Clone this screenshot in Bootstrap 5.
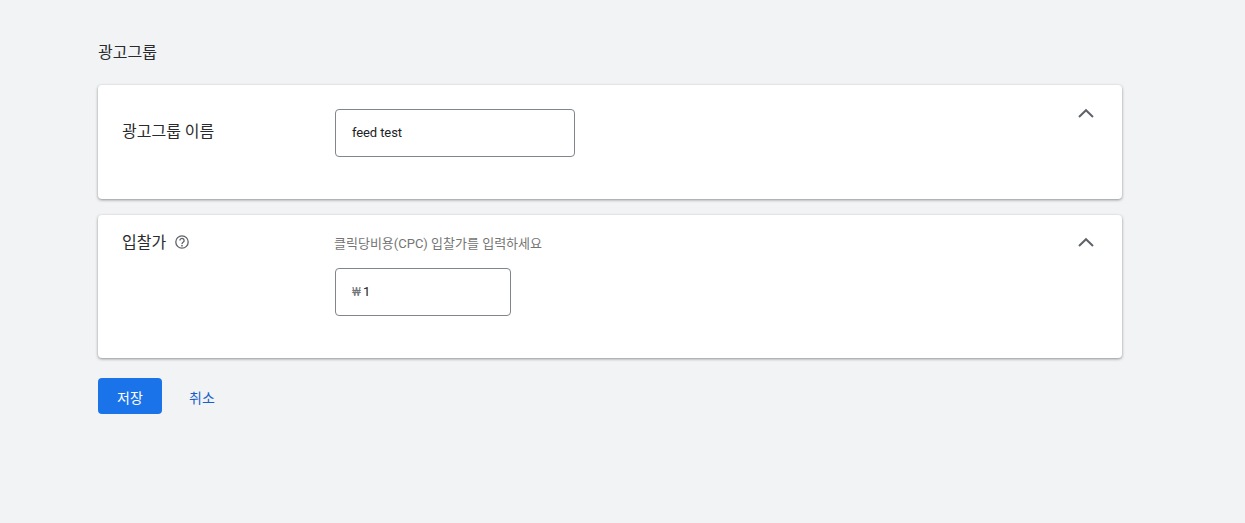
<!DOCTYPE html>
<html lang="ko">
<head>
<meta charset="utf-8">
<title>광고그룹</title>
<link href="https://cdn.jsdelivr.net/npm/bootstrap@5.3.0/dist/css/bootstrap.min.css" rel="stylesheet">
<style>
html, body { height: 100%; }
body { background: #f1f3f4; font-family: Roboto, "Noto Sans CJK KR", sans-serif; color: #202124; }
.page-wrap { width: 1024px; margin-left: 98px; padding-top: 41px; }
.page-title { font-size: 16px; line-height: 24px; font-weight: 400; margin: 0 0 20px; color: #2a2b2e; }
.panel { background: #fff; border-radius: 4px; box-shadow: 0 1px 3px rgba(60,64,67,.55); margin-bottom: 16px; padding: 24px; position: relative; }
.panel-a { height: 114px; }
.panel-b { height: 143px; padding-top: 17px; margin-bottom: 20px; }
.panel-label { width: 213px; font-size: 16px; line-height: 22px; flex: none; color: #2a2b2e; }
.panel-a .panel-label { padding-top: 12px; }
.help-ico { width: 16px; height: 16px; margin-left: 8px; vertical-align: -2px; }
.hint { font-size: 13px; line-height: 24px; color: #757575; margin-bottom: 12px; margin-left: -1px; }
.field { border: 1px solid #80868b; border-radius: 4px; height: 48px; padding: 0 16px; background: #fff; font-size: 13px; color: #202124; display: flex; align-items: center; }
.field input { border: 0; outline: 0; padding: 0; background: transparent; font: inherit; color: inherit; width: 100%; min-width: 0; letter-spacing: -.1px; }
.field-name { width: 240px; }
.field-bid { width: 176px; }
.cur { color: #70757a; font-size: 12px; margin-right: 2px; }
.fold { position: absolute; top: 20px; right: 27px; width: 18px; height: 18px; padding: 0; border: 0; background: none; display: flex; }
.panel-b .fold { top: 19px; }
.btn-save { background: #1a73e8; color: #fff; border: 0; border-radius: 4px; width: 64px; height: 36px; font-size: 14px; padding: 4px 0 0; }
.btn-save:hover { background: #1a73e8; color: #fff; }
.btn-cancel { color: #1a5fc8; background: none; border: 0; font-size: 14px; padding: 4px 0 0; margin-left: 27px; }
</style>
</head>
<body>
<div class="page-wrap">
  <h1 class="page-title">광고그룹</h1>

  <section class="panel panel-a d-flex">
    <div class="panel-label">광고그룹 이름</div>
    <div class="field field-name"><input type="text" value="feed test" aria-label="광고그룹 이름"></div>
    <button class="fold" type="button" aria-label="접기"><svg width="18" height="18" viewBox="0 0 18 18"><path d="M2 12 9 5.2l7 6.8" fill="none" stroke="#5f6368" stroke-width="2"/></svg></button>
  </section>

  <section class="panel panel-b d-flex">
    <div class="panel-label">입찰가<svg class="help-ico" viewBox="0 0 16 16"><circle cx="8" cy="8" r="6.2" fill="none" stroke="#5f6368" stroke-width="1.3"/><path d="M5.9 6.5a2.1 2.1 0 1 1 3.4 1.6c-.8.6-1.3 1-1.3 1.9" fill="none" stroke="#5f6368" stroke-width="1.3"/><circle cx="8" cy="11.7" r=".85" fill="#5f6368"/></svg></div>
    <div>
      <div class="hint">클릭당비용(CPC) 입찰가를 입력하세요</div>
      <div class="field field-bid"><span class="cur">₩</span><input type="text" value="1" aria-label="입찰가"></div>
    </div>
    <button class="fold" type="button" aria-label="접기"><svg width="18" height="18" viewBox="0 0 18 18"><path d="M2 12 9 5.2l7 6.8" fill="none" stroke="#5f6368" stroke-width="2"/></svg></button>
  </section>

  <div class="d-flex align-items-center">
    <button class="btn btn-save" type="button">저장</button>
    <button class="btn btn-cancel" type="button">취소</button>
  </div>
</div>
<script src="https://cdn.jsdelivr.net/npm/bootstrap@5.3.0/dist/js/bootstrap.bundle.min.js"></script>
</body>
</html>
